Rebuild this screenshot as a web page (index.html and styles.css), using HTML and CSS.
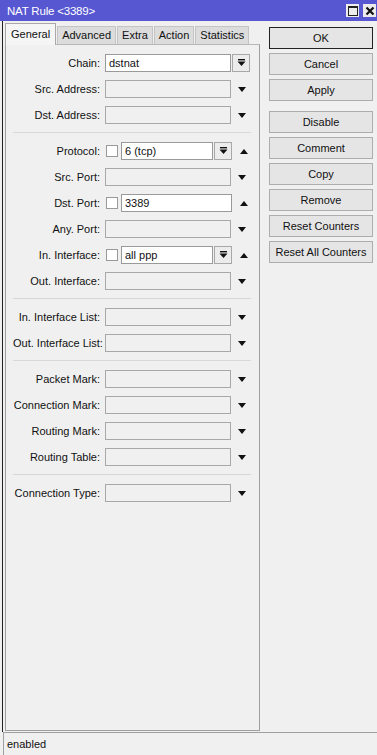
FILE: index.html
```html
<!DOCTYPE html>
<html>
<head>
<meta charset="utf-8">
<title>NAT Rule</title>
<link rel="stylesheet" href="styles.css">
</head>
<body>
<div class="window">
  <div class="titlebar">
    <span class="title">NAT Rule &lt;3389&gt;</span>
    <div class="wbtns">
      <span class="wbtn"><span class="maxbox"></span></span>
      <span class="wbtn"><svg width="10" height="10" viewBox="0 0 10 10"><path d="M1.5 1.5 L8.5 8.5 M8.5 1.5 L1.5 8.5" stroke="#111" stroke-width="2.2"/></svg></span>
    </div>
  </div>
  <div class="content">
    <div class="main">
      <div class="tabs">
        <span class="tab active">General</span>
        <span class="tab">Advanced</span>
        <span class="tab">Extra</span>
        <span class="tab">Action</span>
        <span class="tab">Statistics</span>
      </div>
      <div class="panel">
        <div class="section">
          <div class="row"><label>Chain:</label><div class="field"><span class="input on wide">dstnat</span><span class="dd"><svg width="9" height="8" viewBox="0 0 9 8"><rect x="1" y="0" width="7" height="1.4" fill="#111"/><path d="M0.5 2.5 H8.5 L4.5 7 Z" fill="#111"/></svg></span></div></div>
          <div class="row"><label>Src. Address:</label><div class="field"><span class="input full"></span><span class="arrow down"></span></div></div>
          <div class="row"><label>Dst. Address:</label><div class="field"><span class="input full"></span><span class="arrow down"></span></div></div>
        </div>
        <div class="section">
          <div class="row"><label>Protocol:</label><div class="field"><span class="cb"></span><span class="input on mid">6 (tcp)</span><span class="dd"><svg width="9" height="8" viewBox="0 0 9 8"><rect x="1" y="0" width="7" height="1.4" fill="#111"/><path d="M0.5 2.5 H8.5 L4.5 7 Z" fill="#111"/></svg></span><span class="arrow up"></span></div></div>
          <div class="row"><label>Src. Port:</label><div class="field"><span class="input full"></span><span class="arrow down"></span></div></div>
          <div class="row"><label>Dst. Port:</label><div class="field"><span class="cb"></span><span class="input on part">3389</span><span class="arrow up"></span></div></div>
          <div class="row"><label>Any. Port:</label><div class="field"><span class="input full"></span><span class="arrow down"></span></div></div>
          <div class="row"><label>In. Interface:</label><div class="field"><span class="cb"></span><span class="input on mid">all ppp</span><span class="dd"><svg width="9" height="8" viewBox="0 0 9 8"><rect x="1" y="0" width="7" height="1.4" fill="#111"/><path d="M0.5 2.5 H8.5 L4.5 7 Z" fill="#111"/></svg></span><span class="arrow up"></span></div></div>
          <div class="row"><label>Out. Interface:</label><div class="field"><span class="input full"></span><span class="arrow down"></span></div></div>
        </div>
        <div class="section">
          <div class="row"><label>In. Interface List:</label><div class="field"><span class="input full"></span><span class="arrow down"></span></div></div>
          <div class="row"><label>Out. Interface List:</label><div class="field"><span class="input full"></span><span class="arrow down"></span></div></div>
        </div>
        <div class="section">
          <div class="row"><label>Packet Mark:</label><div class="field"><span class="input full"></span><span class="arrow down"></span></div></div>
          <div class="row"><label>Connection Mark:</label><div class="field"><span class="input full"></span><span class="arrow down"></span></div></div>
          <div class="row"><label>Routing Mark:</label><div class="field"><span class="input full"></span><span class="arrow down"></span></div></div>
          <div class="row"><label>Routing Table:</label><div class="field"><span class="input full"></span><span class="arrow down"></span></div></div>
        </div>
        <div class="section">
          <div class="row"><label>Connection Type:</label><div class="field"><span class="input full"></span><span class="arrow down"></span></div></div>
        </div>
      </div>
    </div>
    <div class="side">
      <span class="btn default">OK</span>
      <span class="btn">Cancel</span>
      <span class="btn">Apply</span>
      <span class="btn gap">Disable</span>
      <span class="btn">Comment</span>
      <span class="btn">Copy</span>
      <span class="btn">Remove</span>
      <span class="btn">Reset Counters</span>
      <span class="btn">Reset All Counters</span>
    </div>
  </div>
  <div class="status"><span class="status-text">enabled</span></div>
</div>
</body>
</html>
```

FILE: styles.css
```css
* { box-sizing: border-box; }
html, body { margin: 0; padding: 0; }
body {
  width: 377px;
  height: 755px;
  overflow: hidden;
  background: #f0f0f0;
  font-family: "Liberation Sans", Arial, sans-serif;
  font-size: 11px;
  color: #111;
}
.window {
  width: 377px;
  height: 755px;
  display: flex;
  flex-direction: column;
  background: #f0f0f0;
}
.titlebar {
  height: 21px;
  background: #5757d1;
  display: flex;
  align-items: center;
  justify-content: space-between;
  padding: 0 1px 0 7px;
  flex: none;
}
.title {
  color: #fff;
  font-size: 11.5px;
  letter-spacing: -0.2px;
}
.wbtns { display: flex; gap: 4px; }
.wbtn {
  width: 13px;
  height: 13px;
  background: #ececec;
  display: flex;
  align-items: center;
  justify-content: center;
}
.maxbox {
  width: 10px;
  height: 10px;
  border: 1px solid #222;
  border-top-width: 2px;
}
.content {
  flex: 1;
  display: flex;
  border-left: 1px solid #222;
  margin-left: 2px;
  min-height: 0;
}
.main {
  width: 257px;
  padding: 2px 0 0 2px;
  display: flex;
  flex-direction: column;
}
.tabs {
  display: flex;
  align-items: flex-end;
  height: 21px;
  position: relative;
  z-index: 1;
}
.tab {
  height: 18px;
  padding: 0 4px;
  line-height: 17px;
  background: #dcdcdc;
  border: 1px solid #c4c4c4;
  border-bottom: none;
  margin-right: 1px;
}
.tab.active {
  height: 22px;
  line-height: 20px;
  background: #f5f5f5;
  border-color: #a8a8a8;
  padding: 0 5px;
  margin-right: 1px;
  margin-bottom: -1px;
}
.panel {
  flex: 1;
  border: 1px solid #a0a0a0;
  border-top-color: #b8b8b8;
  background: #f0f0f0;
  padding: 9px 0 0 0;
  margin-bottom: 1px;
}
.section {
  display: flex;
  flex-direction: column;
  gap: 8px;
  padding: 0 0 8px 0;
  margin: 0 8px 9px 7px;
  border-bottom: 1px solid #d8d8d8;
}
.section:last-child { border-bottom: none; }
.row {
  display: flex;
  align-items: center;
  height: 18px;
}
.row label {
  width: 92px;
  text-align: right;
  padding-right: 5px;
  flex: none;
  white-space: nowrap;
}
.field {
  display: flex;
  align-items: center;
  height: 18px;
}
.input {
  height: 18px;
  border: 1px solid #a8a8a8;
  background: #f0f0f0;
  padding: 0 3px;
  line-height: 16px;
  white-space: nowrap;
}
.input.on { background: #fff; border-color: #9a9a9a; }
.input.full, .input.wide { width: 126px; }
.input.mid { width: 92px; }
.input.part { width: 111px; }
.cb {
  width: 12px;
  height: 12px;
  border: 1px solid #9a9a9a;
  background: #fff;
  margin: 0 3px 0 1px;
  flex: none;
}
.dd {
  width: 18px;
  height: 18px;
  border: 1px solid #a8a8a8;
  background: #ececec;
  margin-left: 1px;
  display: flex;
  align-items: center;
  justify-content: center;
}
.arrow {
  width: 0;
  height: 0;
  border-left: 4.5px solid transparent;
  border-right: 4.5px solid transparent;
}
.arrow.down { border-top: 5px solid #111; margin-left: 7px; }
.arrow.up { border-bottom: 5px solid #111; margin-left: 8px; }
.side {
  padding: 6px 0 0 9px;
  display: flex;
  flex-direction: column;
  gap: 4px;
}
.btn {
  width: 104px;
  height: 22px;
  border: 1px solid #adadad;
  background: #e5e5e5;
  text-align: center;
  line-height: 20px;
}
.btn.default { border-color: #222; }
.btn.gap { margin-top: 6px; }
.status {
  height: 23px;
  flex: none;
  border-top: 1px solid #a0a0a0;
  margin-left: 3px;
  display: flex;
  align-items: center;
  border-left: 1px solid #a0a0a0;
}
.status-text { padding-left: 3px; }
```
